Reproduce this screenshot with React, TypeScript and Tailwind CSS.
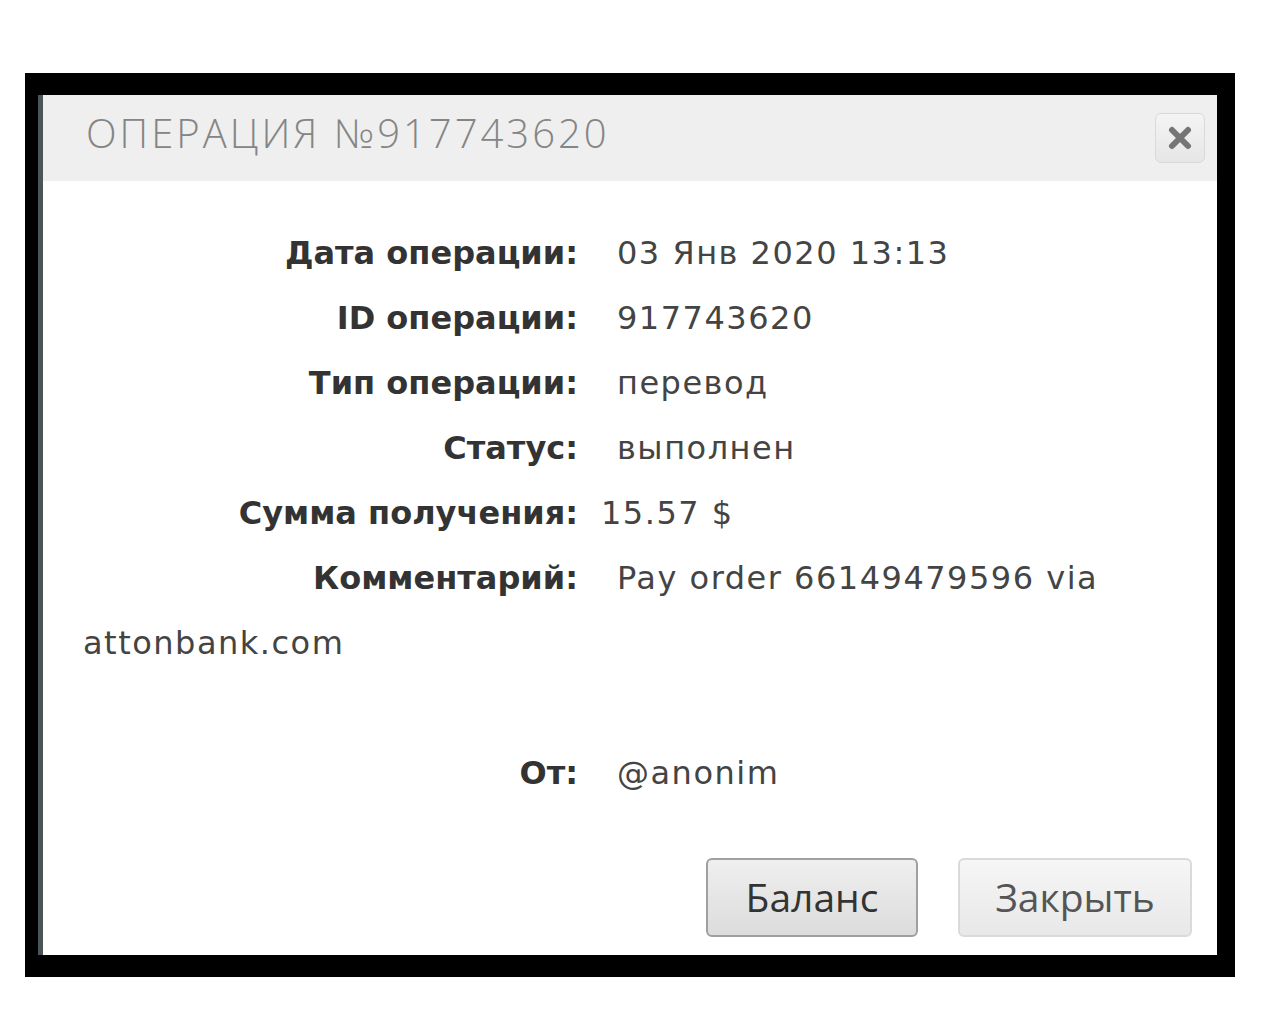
const rows = [
  { label: "Дата операции:", value: "03 Янв 2020 13:13", gap: "ml-[39px]" },
  { label: "ID операции:", value: "917743620", gap: "ml-[39px]" },
  { label: "Тип операции:", value: "перевод", gap: "ml-[39px]" },
  { label: "Статус:", value: "выполнен", gap: "ml-[39px]" },
  { label: "Сумма получения:", value: "15.57 $", gap: "ml-[23px]" },
  { label: "Комментарий:", value: "Pay order 66149479596 via attonbank.com", gap: "ml-[39px]" },
];

export default function App() {
  return (
    <div className="min-h-screen bg-white pt-[73px] pl-[25px]">
      {/* black frame around the pasted dialog */}
      <div className="w-[1210px] bg-black pt-[22px] pb-[22px] pl-[13px] pr-[18px]">
        <div className="h-[860px] bg-white border-l-[5px] border-[#4b5457] flex flex-col">
          {/* Header */}
          <div className="h-[86px] shrink-0 bg-[#efefef] flex items-center justify-between pl-[43px] pr-[12px]">
            <h1 className="mb-[10px] font-['Open_Sans',sans-serif] text-[40px] font-light tracking-[3px] text-[#858585] leading-none">
              ОПЕРАЦИЯ №917743620
            </h1>
            <button
              aria-label="Закрыть"
              className="w-[50px] h-[50px] rounded-[6px] border border-[#d9d9d9] bg-gradient-to-b from-[#f4f4f4] to-[#e6e6e6] flex items-center justify-center"
            >
              <svg width="24" height="24" viewBox="0 0 24 24">
                <path d="M4 4L20 20M20 4L4 20" stroke="#757575" strokeWidth="6" strokeLinecap="round" />
              </svg>
            </button>
          </div>

          {/* Body */}
          <div className="pt-[40px] pl-[40px] pr-[40px] font-['DejaVu_Sans',sans-serif] text-[32px] leading-[65px] text-[#444]">
            {rows.map((row) => (
              <p key={row.label}>
                <span className="inline-block w-[495px] text-right font-bold text-[#333]">
                  {row.label}
                </span>
                <span className={row.gap + " tracking-[1.5px]"}>{row.value}</span>
              </p>
            ))}
            <p>&nbsp;</p>
            <p>
              <span className="inline-block w-[495px] text-right font-bold text-[#333]">От:</span>
              <span className="ml-[39px] tracking-[1.5px]">@anonim</span>
            </p>
          </div>

          {/* Footer */}
          <div className="mt-auto flex justify-end gap-[40px] pr-[25px] pb-[18px] font-['Open_Sans',sans-serif]">
            <button className="w-[212px] h-[79px] rounded-[6px] border-2 border-[#a0a0a0] bg-gradient-to-b from-[#efefef] to-[#dcdcdc] text-[39px] text-[#333]">
              Баланс
            </button>
            <button className="w-[234px] h-[79px] rounded-[6px] border-2 border-[#dadada] bg-gradient-to-b from-[#f6f6f6] to-[#e8e8e8] text-[39px] text-[#555]">
              Закрыть
            </button>
          </div>
        </div>
      </div>
    </div>
  );
}
